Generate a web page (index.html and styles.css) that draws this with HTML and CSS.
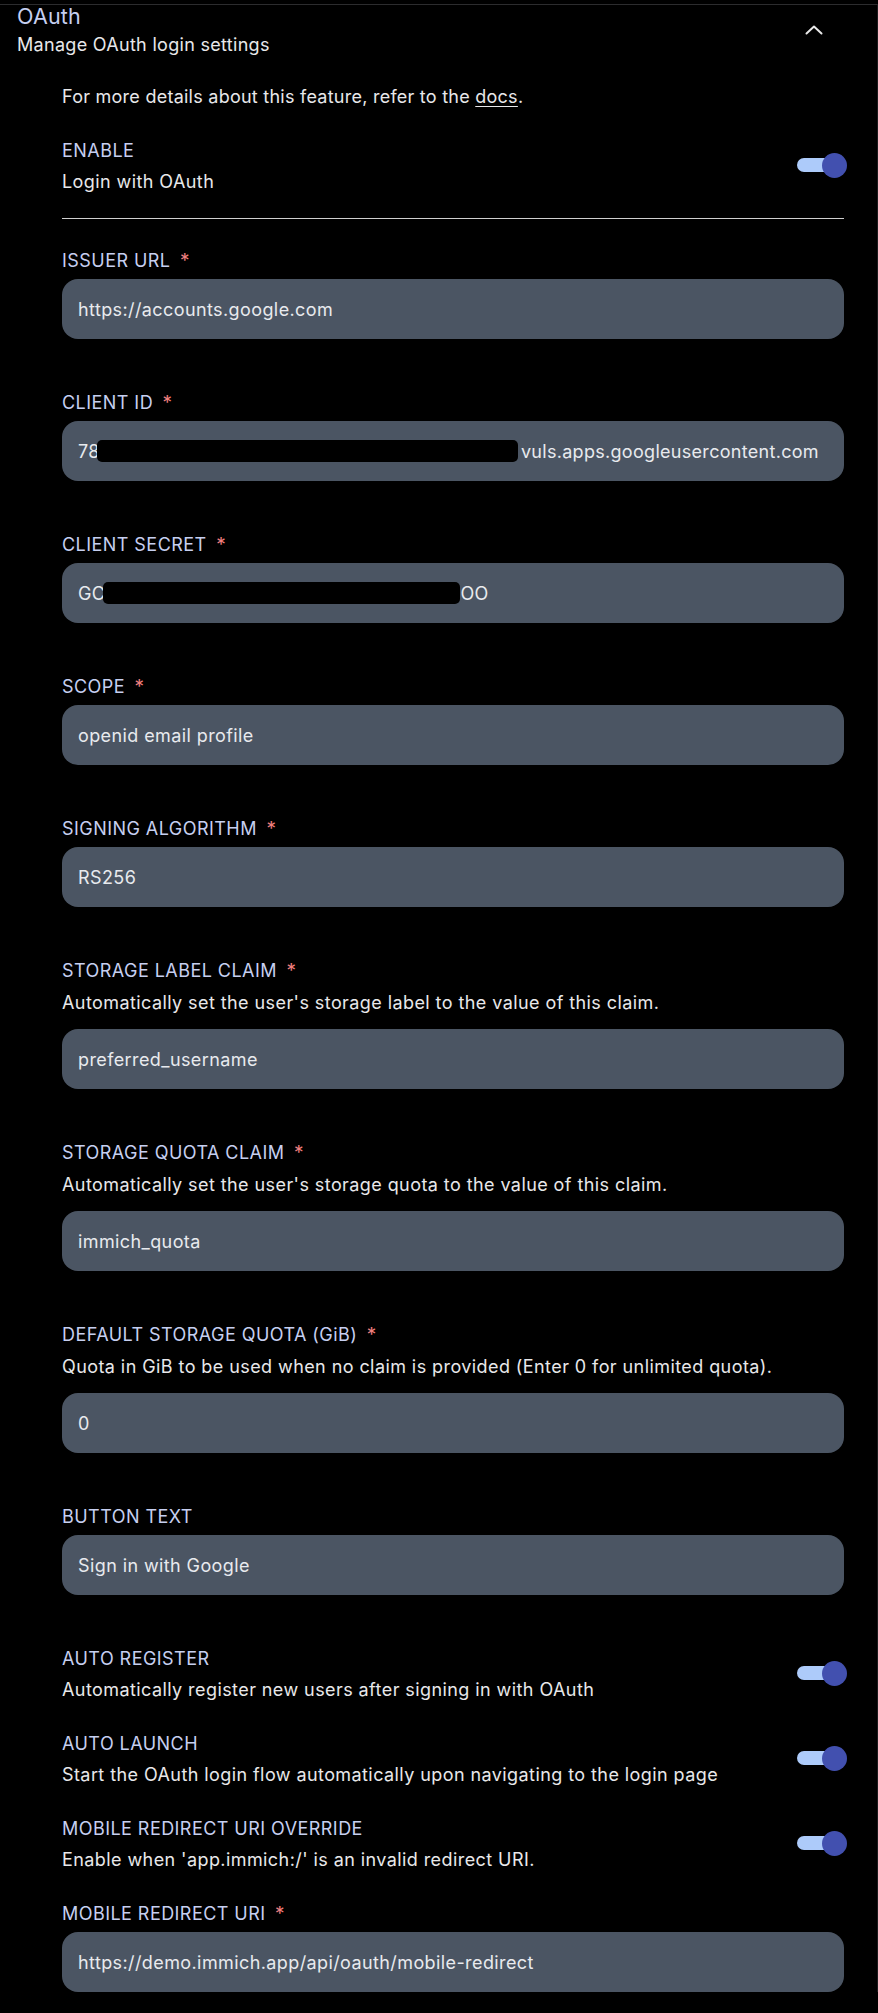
FILE: index.html
```html
<!DOCTYPE html>
<html lang="en">
<head>
<meta charset="utf-8">
<title>OAuth settings</title>
<link rel="stylesheet" href="styles.css">
</head>
<body>
<section class="card">
  <header class="header">
    <div class="header-text">
      <h2 class="title">OAuth</h2>
      <p class="subtitle">Manage OAuth login settings</p>
    </div>
    <svg class="chevron" width="20" height="12" viewBox="0 0 20 12" aria-hidden="true">
      <path d="M2.5 9.5 L10 2.5 L17.5 9.5" fill="none" stroke="#e8e8e8" stroke-width="2" stroke-linecap="round" stroke-linejoin="round"/>
    </svg>
  </header>

  <div class="content">
    <p class="docs">For more details about this feature, refer to the <a href="#" class="link">docs</a>.</p>

    <div class="toggle-row first">
      <div class="toggle-text">
        <div class="label">ENABLE</div>
        <div class="desc">Login with OAuth</div>
      </div>
      <span class="switch"><span class="track"></span><span class="knob"></span></span>
    </div>

    <hr class="divider">

    <div class="field">
      <div class="label">ISSUER URL <span class="req">*</span></div>
      <div class="input">https://accounts.google.com</div>
    </div>

    <div class="field">
      <div class="label">CLIENT ID <span class="req">*</span></div>
      <div class="input"><span>78</span><span class="redact redact-id"></span><span class="after-id">vuls.apps.googleusercontent.com</span></div>
    </div>

    <div class="field">
      <div class="label">CLIENT SECRET <span class="req">*</span></div>
      <div class="input"><span>GC</span><span class="redact redact-secret"></span><span>OO</span></div>
    </div>

    <div class="field">
      <div class="label">SCOPE <span class="req">*</span></div>
      <div class="input">openid email profile</div>
    </div>

    <div class="field">
      <div class="label">SIGNING ALGORITHM <span class="req">*</span></div>
      <div class="input">RS256</div>
    </div>

    <div class="field">
      <div class="label">STORAGE LABEL CLAIM <span class="req">*</span></div>
      <div class="desc field-desc">Automatically set the user's storage label to the value of this claim.</div>
      <div class="input after-desc">preferred_username</div>
    </div>

    <div class="field">
      <div class="label">STORAGE QUOTA CLAIM <span class="req">*</span></div>
      <div class="desc field-desc">Automatically set the user's storage quota to the value of this claim.</div>
      <div class="input after-desc">immich_quota</div>
    </div>

    <div class="field">
      <div class="label">DEFAULT STORAGE QUOTA (GiB) <span class="req">*</span></div>
      <div class="desc field-desc">Quota in GiB to be used when no claim is provided (Enter 0 for unlimited quota).</div>
      <div class="input after-desc">0</div>
    </div>

    <div class="field">
      <div class="label">BUTTON TEXT</div>
      <div class="input">Sign in with Google</div>
    </div>

    <div class="toggle-row">
      <div class="toggle-text">
        <div class="label">AUTO REGISTER</div>
        <div class="desc">Automatically register new users after signing in with OAuth</div>
      </div>
      <span class="switch"><span class="track"></span><span class="knob"></span></span>
    </div>

    <div class="toggle-row">
      <div class="toggle-text">
        <div class="label">AUTO LAUNCH</div>
        <div class="desc">Start the OAuth login flow automatically upon navigating to the login page</div>
      </div>
      <span class="switch"><span class="track"></span><span class="knob"></span></span>
    </div>

    <div class="toggle-row">
      <div class="toggle-text">
        <div class="label">MOBILE REDIRECT URI OVERRIDE</div>
        <div class="desc">Enable when 'app.immich:/' is an invalid redirect URI.</div>
      </div>
      <span class="switch"><span class="track"></span><span class="knob"></span></span>
    </div>

    <div class="field last">
      <div class="label">MOBILE REDIRECT URI <span class="req">*</span></div>
      <div class="input">https://demo.immich.app/api/oauth/mobile-redirect</div>
    </div>
  </div>
</section>
</body>
</html>
```

FILE: styles.css
```css
* { box-sizing: border-box; }

html, body {
  margin: 0;
  padding: 0;
  background: #000;
}

body {
  font-family: Inter, "Noto Sans", sans-serif;
  color: #e6e8ec;
  width: 878px;
  min-height: 2013px;
}

.card {
  margin-top: 4px;
  border-top: 1px solid #2c2c2e;
  border-right: 1px solid #1c1c1e;
}

.header {
  display: flex;
  justify-content: space-between;
  align-items: center;
  padding: 0 53px 0 17px;
}

.title {
  margin: 0;
  font-size: 21.5px;
  line-height: 22px;
  font-weight: 400;
  color: #c6cff0;
  letter-spacing: 0.2px;
}

.subtitle {
  margin: 6px 0 0;
  font-size: 18px;
  line-height: 24px;
  color: #e8e8ea;
  letter-spacing: 0.3px;
}

.chevron {
  display: block;
  margin-top: -2px;
}

.content {
  padding: 0 33px 0 62px;
}

.docs {
  margin: 28px 0 0;
  font-size: 18px;
  line-height: 24px;
  color: #e8e8ea;
  letter-spacing: 0.25px;
}

.link {
  color: #e8e8ea;
  text-decoration: underline;
  text-underline-offset: 3px;
}

.label {
  font-size: 18px;
  line-height: 24px;
  color: #c6cff0;
  letter-spacing: 0.45px;
}

.req {
  color: #ef7f7f;
  margin-left: 4px;
  font-size: 19px;
}

.desc {
  font-size: 18px;
  line-height: 24px;
  color: #e8e8ea;
  letter-spacing: 0.42px;
}

.toggle-row {
  display: flex;
  justify-content: space-between;
  align-items: center;
  margin-bottom: 30px;
}

.toggle-row.first {
  margin-top: 30px;
  margin-bottom: 0;
}

.toggle-text .desc {
  margin-top: 7px;
}

.switch {
  position: relative;
  width: 50px;
  height: 24px;
  flex: none;
  margin-top: -3px;
  margin-right: -3px;
}

.track {
  position: absolute;
  left: 0;
  top: 5px;
  width: 44px;
  height: 14px;
  border-radius: 7px;
  background: #adcbfa;
}

.knob {
  position: absolute;
  right: 0;
  top: 0;
  width: 25px;
  height: 25px;
  border-radius: 50%;
  background: #4250af;
}

.divider {
  margin: 24px 0 30px;
  border: 0;
  border-top: 1px solid #d0d0d0;
}

.field {
  margin-bottom: 52px;
}

.field.last {
  margin-bottom: 0;
}

.field-desc {
  margin-top: 8px;
}

.input {
  display: flex;
  align-items: center;
  margin-top: 6px;
  height: 60px;
  padding: 0 16px;
  border-radius: 16px;
  background: #4b5563;
  color: #e8eaee;
  font-size: 18px;
  letter-spacing: 0.4px;
  white-space: nowrap;
}

.input.after-desc {
  margin-top: 14px;
}

.redact {
  display: inline-block;
  height: 22px;
  background: #000;
  border-radius: 5px;
  flex: none;
}

.redact-id {
  width: 421px;
  margin-left: -3px;
}

.after-id {
  margin-left: 3px;
  letter-spacing: 0.3px;
}

.redact-secret {
  width: 357px;
  margin-left: -2px;
}
```
